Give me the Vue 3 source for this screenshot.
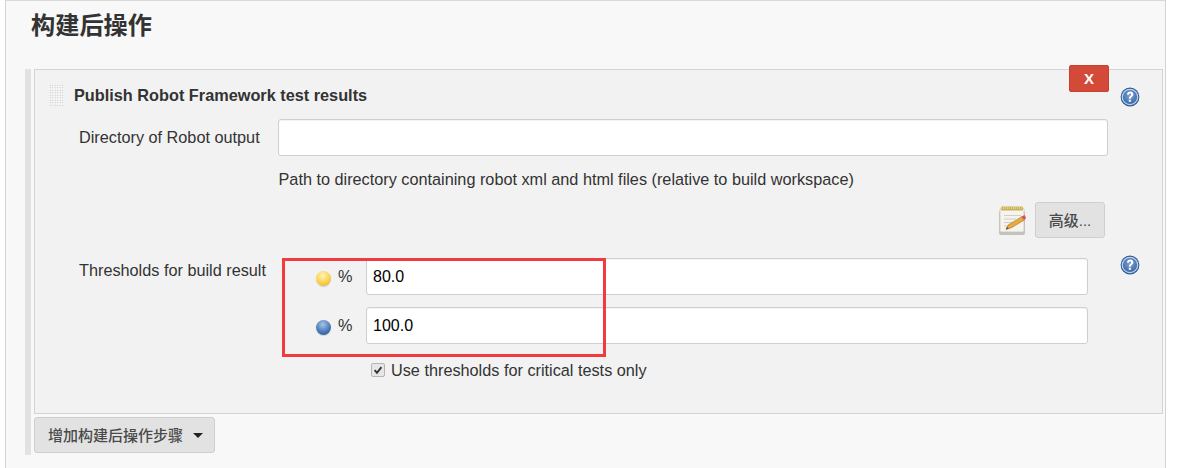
<template>
  <div class="page">
    <section class="section">
      <h2 class="section-title">构建后操作</h2>
      <div class="chunk-wrap">
        <div class="chunk">
          <button class="delete-btn" type="button">X</button>
          <div class="chunk-head">
            <div class="handle"></div>
            <b class="chunk-title">Publish Robot Framework test results</b>
            <svg class="help help-top" viewBox="0 0 20 20">
              <use href="#help-icon" />
            </svg>
          </div>

          <div class="row row-dir">
            <label class="row-label">Directory of Robot output</label>
            <input class="text-input dir-input" type="text" />
          </div>
          <div class="hint">Path to directory containing robot xml and html files (relative to build workspace)</div>

          <div class="advanced">
            <svg class="notepad" viewBox="0 0 30 30">
              <rect x="1" y="6" width="26" height="24" rx="2" fill="#a9a79c" opacity="0.65" />
              <rect x="2" y="3" width="24" height="24" rx="1.500" fill="#f5f4ee" stroke="#c9c6b6" stroke-width="0.8" />
              <rect x="3" y="1.500" width="22" height="4" rx="1" fill="#c9b25c" />
              <path d="M3 3h22" stroke="#e9d98e" stroke-dasharray="1 1" stroke-width="1.500" />
              <path d="M6 10.500h17M6 14h12M6 17.500h9M6 21h6" stroke="#d0d0c8" stroke-width="1.200" />
              <path d="M8 24.500l2-4.500L24 11.500l2.500 3.500-13 7.700z" fill="#e8a93f" stroke="#a87a30" stroke-width="0.600" />
              <path d="M23.500 11.800l3-1.800 1.600 3-2 2z" fill="#d9534a" />
              <path d="M8 24.500l1-2.600 2 1.400z" fill="#55493a" />
            </svg>
            <button class="plain-btn adv-btn" type="button">高级...</button>
          </div>

          <div class="row row-thresholds">
            <label class="row-label th-label">Thresholds for build result</label>
            <div class="th-fields">
              <div class="th-row" v-for="t in thresholds" :key="t.value">
                <span class="ball" :class="t.ball"></span>
                <span class="percent">%</span>
                <input class="text-input th-input" type="text" :value="t.value" />
              </div>
              <label class="check-row">
                <span class="checkbox">
                  <svg viewBox="0 0 14 14">
                    <path d="M3 7.200l2.800 3L11 3.600" fill="none" stroke="#333" stroke-width="2.200" />
                  </svg>
                </span>
                Use thresholds for critical tests only
              </label>
            </div>
            <svg class="help help-th" viewBox="0 0 20 20">
              <use href="#help-icon" />
            </svg>
          </div>

          <div class="red-box"></div>
        </div>
        <button class="plain-btn add-btn" type="button">
          增加构建后操作步骤
          <span class="caret"></span>
        </button>
      </div>
    </section>

    <svg class="defs" width="0" height="0">
      <defs>
        <radialGradient id="help-bg" cx="50%" cy="40%" r="60%">
          <stop offset="0" stop-color="#7fa5d6" />
          <stop offset="1" stop-color="#3a68a8" />
        </radialGradient>
        <g id="help-icon">
          <circle cx="10" cy="10" r="9.400" fill="#2f5c9c" />
          <circle cx="10" cy="10" r="8.300" fill="#c4d3e8" />
          <circle cx="10" cy="10" r="7.100" fill="url(#help-bg)" />
          <path d="M6.900 7.600c.2-2 1.500-3.100 3.300-3.100 1.900 0 3.200 1.100 3.200 2.800 0 1.300-.7 2-1.600 2.600-.8.600-1.100 1-1.100 1.900H8.900c0-1.400.4-2.100 1.400-2.800.7-.5 1-.9 1-1.500 0-.7-.4-1.100-1.100-1.100-.8 0-1.200.5-1.300 1.300z" fill="#fff" />
          <rect x="8.800" y="12.700" width="2" height="2.100" fill="#fff" />
        </g>
      </defs>
    </svg>
  </div>
</template>

<script setup>
const thresholds = [
  { value: "80.0", ball: "yellow" },
  { value: "100.0", ball: "blue" },
];
</script>

<style>
html,
body {
  margin: 0;
  background: #fff;
}
</style>

<style scoped>
.page {
  width: 1193px;
  height: 468px;
  overflow: hidden;
  box-sizing: border-box;
  padding-left: 5px;
  font-family: "Liberation Sans", "Noto Sans CJK SC", sans-serif;
  font-size: 16.250px;
  color: #333;
}

.section {
  width: 1161px;
  height: 468px;
  box-sizing: border-box;
  background: #f8f8f8;
  border-left: 1px solid #d4d4d4;
  border-right: 1px solid #d4d4d4;
  border-top: 1px solid #d8d8d8;
}

.section-title {
  margin: 0;
  padding: 10px 0 0 25px;
  height: 58px;
  box-sizing: border-box;
  font-size: 24.200px;
  line-height: 30px;
  font-weight: 700;
  color: #333;
}

.chunk-wrap {
  margin: 10px 0 0 19px;
  width: 1137px;
  height: 386px;
  box-sizing: border-box;
  border-left: 6px solid #e2e2e2;
  padding-left: 3px;
}

.chunk {
  position: relative;
  width: 1129px;
  height: 345px;
  box-sizing: border-box;
  background: #f2f2f2;
  border: 1px solid #d4d4d4;
}

.delete-btn {
  position: absolute;
  top: -5px;
  right: 53px;
  width: 40px;
  height: 27px;
  padding: 0;
  border: 1px solid #c9402f;
  border-radius: 2px;
  background: #d44a38;
  color: #fff;
  font: 700 15px "Liberation Sans", sans-serif;
}

.chunk-head {
  display: flex;
  align-items: center;
  height: 49px;
  padding-left: 14px;
  position: relative;
}

.handle {
  width: 15px;
  height: 22px;
  margin-top: 1px;
  background-image: radial-gradient(circle, #d2d2d2 0.7px, #fbfbfb 1px);
  background-size: 2.500px 2.500px;
}

.chunk-title {
  margin: 2px 0 0 10px;
  font-size: 16.300px;
  color: #333;
}

.help {
  position: absolute;
  width: 20px;
  height: 20px;
  left: 1085px;
}

.help-top {
  top: 17px;
}

.help-th {
  top: 185px;
}

.row {
  display: flex;
  padding-left: 44px;
}

.row-dir {
  align-items: center;
}

.row-label {
  width: 199px;
  flex: none;
}

.text-input {
  box-sizing: border-box;
  background: #fff;
  border: 1px solid #cfcfcf;
  border-radius: 3px;
  box-shadow: inset 0 1px 1px rgba(0, 0, 0, 0.05);
  font: 16px "Liberation Sans", sans-serif;
  color: #000;
  padding: 0 6px;
  outline: none;
}

.dir-input {
  width: 830px;
  height: 37px;
}

.hint {
  margin: 14px 0 0 243.500px;
  line-height: 18px;
}

.advanced {
  display: flex;
  align-items: center;
  justify-content: flex-end;
  gap: 7px;
  margin: 14px 57px 0 0;
  height: 36px;
}

.notepad {
  width: 30px;
  height: 30px;
}

.plain-btn {
  box-sizing: border-box;
  border: 1px solid #cfcfcf;
  border-radius: 3px;
  background: #e2e2e2;
  color: #4a4a4a;
  font: 500 15px "Liberation Sans", "Noto Sans CJK SC", sans-serif;
  padding: 0 0 2px;
}

.adv-btn {
  width: 70px;
  height: 36px;
}

.row-thresholds {
  margin-top: 20px;
  align-items: flex-start;
}

.th-label {
  padding-top: 3px;
  line-height: 18px;
}

.th-fields {
  display: flex;
  flex-direction: column;
  gap: 12px;
  margin-left: 38px;
}

.th-row {
  display: flex;
  align-items: center;
}

.ball {
  width: 15px;
  height: 15px;
  border-radius: 50%;
  margin-top: 3px;
  box-shadow: 0 1px 1px rgba(0, 0, 0, 0.15);
}

.ball.yellow {
  background: radial-gradient(circle at 45% 30%, #fff3bb 0, #fcd455 50%, #e8ab1e 100%);
}

.ball.blue {
  background: radial-gradient(circle at 45% 30%, #a8c4e8 0, #4c7bb8 55%, #1f4880 100%);
}

.percent {
  margin-left: 7px;
  width: 28px;
}

.th-input {
  width: 722px;
  height: 37px;
}

.check-row {
  display: flex;
  align-items: center;
  gap: 6px;
  margin: 5px 0 0 55px;
  line-height: 18px;
}

.checkbox {
  width: 14px;
  height: 14px;
  box-sizing: border-box;
  border: 1px solid #b5b5b5;
  border-radius: 2px;
  background: #e6e6e6;
  display: block;
}

.checkbox svg {
  display: block;
  width: 12px;
  height: 12px;
}

.red-box {
  position: absolute;
  left: 247px;
  top: 188px;
  width: 324px;
  height: 99px;
  box-sizing: border-box;
  border: 3px solid #f33a3e;
}

.add-btn {
  display: flex;
  align-items: center;
  gap: 10px;
  width: 181px;
  height: 36px;
  margin-top: 3px;
  padding-left: 13px;
}

.caret {
  width: 0;
  height: 0;
  margin-top: 2px;
  border-left: 5px solid transparent;
  border-right: 5px solid transparent;
  border-top: 5px solid #222;
}

.defs {
  position: absolute;
}
</style>
